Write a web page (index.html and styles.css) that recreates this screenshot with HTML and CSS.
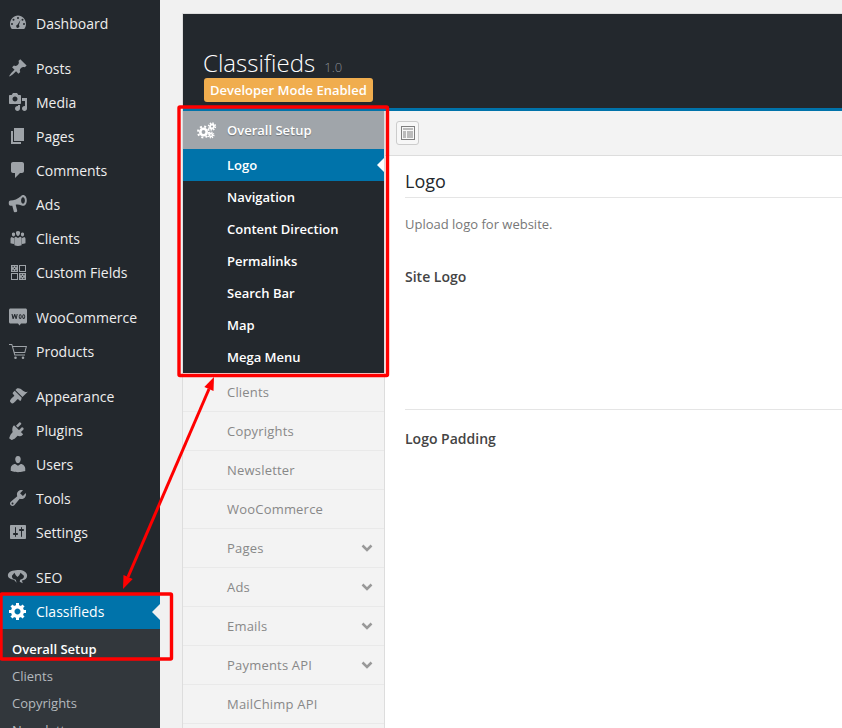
FILE: index.html
```html
<!DOCTYPE html>
<html>

<head>
    <title>Classifieds</title>
    <meta charset="UTF-8">
    <link rel="stylesheet" href="styles.css">
</head>

<body>
    <div class="page">
        <!-- admin menu -->
        <div class="adminmenu">
            <a class="menu-item">
                <svg class="dash" viewBox="0 0 20 20"><path fill-rule="evenodd" d="M3.8 16h12.400C17.300 14.600 18 12.800 18 10.900 18 6.300 14.400 2.500 10 2.500S2 6.300 2 10.900c0 1.900.7 3.700 1.800 5.100zM10 4a1 1 0 1 1 0 2 1 1 0 0 1 0-2zM5.500 5.800a1 1 0 1 1 0 2 1 1 0 0 1 0-2zM14.500 5.800a1 1 0 1 1 0 2 1 1 0 0 1 0-2zM4 10a1 1 0 1 1 0 2 1 1 0 0 1 0-2zM16 10a1 1 0 1 1 0 2 1 1 0 0 1 0-2zM12.500 7l-1.600 5.100a1.600 1.600 0 1 1-1.500-.4z"/></svg>
                Dashboard
            </a>
            <div class="menu-sep"></div>
            <a class="menu-item">
                <svg class="dash" viewBox="0 0 20 20"><path d="M10.440 3.020l1.820-1.820 6.360 6.350-1.830 1.820c-1.050-.68-2.480-.57-3.410.36l-.75.75c-.92.93-1.040 2.350-.35 3.410l-1.830 1.820-2.410-2.410-2.800 2.790c-.42.42-3.380 2.710-3.800 2.290s1.860-3.390 2.280-3.810l2.790-2.790L4.100 9.360l1.830-1.820c1.050.69 2.480.57 3.400-.36l.75-.75c.93-.92 1.050-2.350.36-3.410z"/></svg>
                Posts
            </a>
            <a class="menu-item">
                <svg class="dash" viewBox="0 0 20 20"><path d="M13 11V4c0-.55-.45-1-1-1h-1.670L9 1H5L3.670 3H2c-.55 0-1 .45-1 1v7c0 .55.45 1 1 1h10c.55 0 1-.45 1-1zM7 4.500c1.380 0 2.500 1.120 2.500 2.500S8.380 9.500 7 9.500 4.500 8.380 4.500 7 5.620 4.500 7 4.500zM14 6h5v10.500c0 1.380-1.120 2.500-2.500 2.500S14 17.880 14 16.500s1.120-2.500 2.500-2.500c.17 0 .34.020.5.050V9h-3V6zm-4 8.050V13h2v3.500c0 1.380-1.120 2.500-2.500 2.500S7 17.880 7 16.500 8.120 14 9.500 14c.17 0 .34.020.5.050z"/></svg>
                Media
            </a>
            <a class="menu-item">
                <svg class="dash" viewBox="0 0 20 20"><path d="M6 15V2h10v13H6zm-1 1h8v2H3V5h2v11z"/></svg>
                Pages
            </a>
            <a class="menu-item">
                <svg class="dash" viewBox="0 0 20 20"><path d="M5 2h9c1.100 0 2 .9 2 2v7c0 1.100-.9 2-2 2h-2l-5 5v-5H5c-1.100 0-2-.9-2-2V4c0-1.100.9-2 2-2z"/></svg>
                Comments
            </a>
            <a class="menu-item">
                <svg class="dash" viewBox="0 0 20 20"><path fill-rule="evenodd" d="M15 1c2.400 0 3.800 2.500 3.800 5.400S17.400 11.800 15 11.800c-.5 0-1-.1-1.400-.4C11 10.400 8.700 10.500 7.700 10.800l1.500 6c.1.500-.2 1-.7 1.100l-1.600.4c-.5.1-1-.2-1.100-.7L4.300 11.700 2.600 11.800c-1 0-1.800-.8-1.800-2V8.300c0-1 .7-1.800 1.600-1.900 3.600-.1 7.300-1.300 10.500-4.200C13.500 1.400 14.200 1 15 1zM15 3.200c-1.100 0-1.900 1.400-1.900 3.200s.8 3.200 1.900 3.200 1.900-1.400 1.900-3.200S16.100 3.200 15 3.200z"/></svg>
                Ads
            </a>
            <a class="menu-item">
                <svg class="dash" viewBox="0 0 20 20"><path d="M10 3a2 2 0 0 1 2 2.300c-.1 1.300-.9 2.600-2 2.600S8.100 6.600 8 5.300A2 2 0 0 1 10 3zM5.500 4.500a1.600 1.600 0 0 1 1.600 1.900c-.1 1-.7 2-1.600 2s-1.500-1-1.600-2A1.600 1.600 0 0 1 5.500 4.500zM14.500 4.500a1.600 1.600 0 0 1 1.600 1.900c-.1 1-.7 2-1.600 2s-1.500-1-1.600-2A1.600 1.600 0 0 1 14.500 4.500zM7.800 8.700L10 10l2.200-1.300c.9.300 1.400 1.200 1.400 2.200v6.300c-1.200.5-2.400.7-3.600.7s-2.400-.2-3.600-.7v-6.300c0-1 .5-1.900 1.400-2.200zM3.700 9l1.800 1 .9-.5c-.2.400-.3.900-.3 1.400v5.200C5 16 3.700 15.700 2.500 15.200v-4.400c0-.7.400-1.400 1.200-1.800zM16.300 9c.8.4 1.200 1.100 1.200 1.800v4.400c-1.200.5-2.500.8-3.600.9v-5.200c0-.5-.1-1-.3-1.400l.9.5z"/></svg>
                Clients
            </a>
            <a class="menu-item">
                <svg class="dash" viewBox="0 0 20 20"><path fill-rule="evenodd" d="M3 3h7v7H3zM4.500 4v1.200h1.200V4zM7.300 4v1.200h1.200V4zM5.900 5.900v1.200h1.200V5.900zM4.500 7.800V9h1.200V7.800zM7.300 7.800V9h1.200V7.800zM11 3h7v7h-7zM12 4v5h5V4zM3 11h7v7H3zM4 12v5h5v-5zM11 11h7v7h-7zM12.500 12v1.200h1.200V12zM15.300 12v1.200h1.200V12zM13.900 13.900v1.200h1.200v-1.200zM12.500 15.800V17h1.200v-1.200zM15.300 15.800V17h1.200v-1.200z"/></svg>
                Custom Fields
            </a>
            <div class="menu-sep"></div>
            <a class="menu-item">
                <svg class="dash" viewBox="0 0 20 20"><path fill-rule="evenodd" d="M2.500 1.500h15c.8 0 1.500.7 1.500 1.500v12c0 .8-.7 1.500-1.500 1.500H13l-1.500 2-1.500-2H2.500C1.700 16.500 1 15.800 1 15V3c0-.8.7-1.500 1.500-1.500zM3.500 7l1.100 5h1l1.100-3 .9 3h1L9.700 7h-1l-.6 3L7.200 7h-.9L5.200 10l-.6-3zM12.200 7.200a1.500 2.400 0 1 0 .01 0zM12.200 8.300a.6 1.300 0 1 1-.01 0zM15.700 7.200a1.500 2.400 0 1 0 .01 0zM15.700 8.300a.6 1.300 0 1 1-.01 0z"/></svg>
                WooCommerce
            </a>
            <a class="menu-item">
                <svg class="dash" viewBox="0 0 20 20"><path d="M1 3h3.200l.6 2H19l-1.800 7H6.800l.4 1.500H17v1H6.400L3.500 4H1zM5.100 6l1.500 5h9.800l1.300-5zM7.500 15.500a1.300 1.300 0 1 1 0 2.600 1.300 1.300 0 0 1 0-2.600zM15 15.500a1.300 1.300 0 1 1 0 2.600 1.300 1.300 0 0 1 0-2.600z"/></svg>
                Products
            </a>
            <div class="menu-sep"></div>
            <a class="menu-item">
                <svg class="dash" viewBox="0 0 20 20"><path d="M14.480 11.060L7.410 3.990l1.500-1.500c.5-.56 2.300-.47 3.510.32 1.210.8 1.430 1.280 2.910 2.100 1.180.64 2.450 1.260 4.450.85zm-.71.710L6.700 4.700 4.930 6.470c-.39.39-.39 1.020 0 1.410l1.060 1.060c.39.39.39 1.030 0 1.420-.6.6-1.430 1.150-2.040 1.760-.7.7-2 1.990-1.990 2.960.01.970 1.430 2.390 2.390 2.400.97.010 2.260-1.290 2.960-1.990.61-.61 1.160-1.440 1.760-2.040.39-.39 1.030-.39 1.420 0l1.060 1.060c.39.39 1.020.39 1.410 0z"/></svg>
                Appearance
            </a>
            <a class="menu-item">
                <svg class="dash" viewBox="0 0 20 20"><path d="M13.110 4.360L9.870 7.600 8 5.730l3.240-3.240c.35-.34 1.050-.2 1.560.32.52.51.66 1.210.31 1.550zm-8 1.770l.91-.91 9.130 9.130-.91.91c-.96.96-3.200 1.300-4.630.6L6.600 18.700c-.4.4-3 1.300-3 1.300l-2.500-1.700 1.400-3.600 2.200-2.700C4 10.600 4.200 7.100 5.110 6.130zm10.370 3.300l-3.240 3.240-1.870-1.870 3.240-3.240c.34-.35 1.040-.21 1.550.31.52.51.66 1.210.32 1.560z"/></svg>
                Plugins
            </a>
            <a class="menu-item">
                <svg class="dash" viewBox="0 0 20 20"><path d="M10 9.250c-2.270 0-2.730-3.440-2.730-3.440C7 4.020 7.820 2 9.970 2c2.160 0 2.980 2.020 2.710 3.810 0 0-.41 3.440-2.680 3.440zm0 2.570L12.720 10c2.390 0 4.520 2.330 4.520 4.530v2.490s-3.650 1.130-7.240 1.130c-3.650 0-7.240-1.130-7.240-1.130v-2.490c0-2.250 1.940-4.480 4.470-4.480z"/></svg>
                Users
            </a>
            <a class="menu-item">
                <svg class="dash" viewBox="0 0 20 20"><path d="M16.680 9.770c-1.340 1.340-3.300 1.670-4.950.99l-5.410 6.520c-.99.99-2.590.99-3.580 0s-.99-2.590 0-3.570l6.520-5.420c-.68-1.650-.35-3.610.99-4.950 1.280-1.280 3.120-1.620 4.720-1.060l-2.890 2.890 2.820 2.820 2.860-2.870c.53 1.580.18 3.400-1.080 4.660zM3.810 16.210c.4.390 1.030.39 1.420 0 .4-.4.4-1.030 0-1.420-.39-.4-1.020-.4-1.420 0-.39.39-.39 1.020 0 1.420z"/></svg>
                Tools
            </a>
            <a class="menu-item">
                <svg class="dash" viewBox="0 0 20 20"><path d="M18 16V4c0-.55-.45-1-1-1H3c-.55 0-1 .45-1 1v12c0 .55.45 1 1 1h14c.55 0 1-.45 1-1zM8 11h1c.55 0 1 .45 1 1s-.45 1-1 1H8v1.500c0 .28-.22.5-.5.5s-.5-.22-.5-.5V13H6c-.55 0-1-.45-1-1s.45-1 1-1h1V5.500c0-.28.22-.5.5-.5s.5.22.5.5V11zm5-2h-1c-.55 0-1-.45-1-1s.45-1 1-1h1V5.500c0-.28.22-.5.5-.5s.5.22.5.5V7h1c.55 0 1 .45 1 1s-.45 1-1 1h-1v5.500c0 .28-.22.5-.5.5s-.5-.22-.5-.5V9z"/></svg>
                Settings
            </a>
            <div class="menu-sep"></div>
            <a class="menu-item">
                <svg class="dash seo" viewBox="0 0 24 20"><path d="M12 2C17 1.500 23 3.500 23 8.500c0 3-2.500 5-6 5.500l1 3-3.500-1.500.5-2.500 1.500-.5c2-.5 3.200-2 2.800-4L15.500 5l-1.500 3-2 2-2-2-1.500-3L5.700 8.500c-.4 2 .8 3.500 2.800 4l1.500.5 1 3.500-3-3.500C4 12.500 1 11 1 8 1 3.800 7 2.300 12 2z"/></svg>
                SEO
            </a>
            <a class="menu-item current">
                <svg class="dash" viewBox="0 0 20 20"><path fill-rule="evenodd" d="M18 12h-2.180c-.17.7-.44 1.350-.81 1.930l1.540 1.540-2.100 2.100-1.540-1.540c-.58.36-1.230.64-1.910.81V19H8v-2.180c-.68-.17-1.330-.45-1.910-.81l-1.540 1.540-2.120-2.120 1.540-1.540c-.36-.58-.63-1.230-.79-1.890H1V9h2.180c.17-.7.44-1.350.81-1.930L2.450 5.530l2.100-2.100 1.540 1.540c.58-.36 1.230-.64 1.910-.81V2h3v2.180c.68.17 1.330.45 1.910.81l1.540-1.540 2.120 2.120-1.540 1.540c.36.58.63 1.230.79 1.890H18v3zm-8.500 1.500c1.660 0 3-1.340 3-3s-1.340-3-3-3-3 1.340-3 3 1.340 3 3 3z"/></svg>
                Classifieds
            </a>
            <div class="submenu">
                <a class="active">Overall Setup</a>
                <a>Clients</a>
                <a>Copyrights</a>
                <a>Newsletter</a>
            </div>
        </div>

        <!-- options panel -->
        <div class="main">
            <div class="panel">
                <div class="panel-head">
                    <h1>Classifieds <small>1.0</small></h1>
                    <span class="badge">Developer Mode Enabled</span>
                </div>
                <div class="panel-body">
                    <div class="tabs">
                        <div class="tab-group">
                            <svg class="gears" viewBox="0 0 20 17">
                                <circle class="gear-ring" cx="6.500" cy="10" r="3.200" stroke-width="2.600"/>
                                <circle class="gear-ring" cx="6.500" cy="10" r="5.500" stroke-width="2" stroke-dasharray="2 2.320"/>
                                <circle class="gear-ring" cx="15" cy="4.500" r="2" stroke-width="1.800"/>
                                <circle class="gear-ring" cx="15" cy="4.500" r="3.400" stroke-width="1.600" stroke-dasharray="1.400 1.270"/>
                                <circle class="gear-ring" cx="14" cy="13" r="1.500" stroke-width="1.500"/>
                                <circle class="gear-ring" cx="14" cy="13" r="2.800" stroke-width="1.400" stroke-dasharray="1.200 1"/>
                            </svg>
                            Overall Setup
                        </div>
                        <div class="tab-sub">
                            <a class="active">Logo</a>
                            <a>Navigation</a>
                            <a>Content Direction</a>
                            <a>Permalinks</a>
                            <a>Search Bar</a>
                            <a>Map</a>
                            <a>Mega Menu</a>
                        </div>
                        <a class="tab">Clients</a>
                        <a class="tab">Copyrights</a>
                        <a class="tab">Newsletter</a>
                        <a class="tab">WooCommerce</a>
                        <a class="tab">Pages <svg class="chev" viewBox="0 0 12 8"><path d="M1.500 1.500L6 6l4.500-4.500"/></svg></a>
                        <a class="tab">Ads <svg class="chev" viewBox="0 0 12 8"><path d="M1.500 1.500L6 6l4.500-4.500"/></svg></a>
                        <a class="tab">Emails <svg class="chev" viewBox="0 0 12 8"><path d="M1.500 1.500L6 6l4.500-4.500"/></svg></a>
                        <a class="tab">Payments API <svg class="chev" viewBox="0 0 12 8"><path d="M1.500 1.500L6 6l4.500-4.500"/></svg></a>
                        <a class="tab">MailChimp API</a>
                    </div>
                    <div class="content">
                        <div class="toolbar">
                            <div class="tool-btn">
                                <svg viewBox="0 0 14 14">
                                    <rect class="pane" x="2" y="2" width="10" height="2"/>
                                    <rect class="pane" x="2" y="5" width="3" height="7"/>
                                    <rect class="pane" x="6" y="5" width="6" height="7"/>
                                    <rect class="frame" x=".5" y=".5" width="13" height="13"/>
                                </svg>
                            </div>
                        </div>
                        <div class="fields">
                            <h2>Logo</h2>
                            <p class="desc">Upload logo for website.</p>
                            <div class="field field-logo">Site Logo</div>
                            <div class="field">Logo Padding</div>
                        </div>
                    </div>
                </div>
            </div>
        </div>
    </div>

    <!-- red annotations drawn over the screenshot -->
    <svg class="notes" viewBox="0 0 842 728">
        <rect x="179" y="107" width="208.500" height="268.500" rx="1"/>
        <rect x="1" y="594" width="170.500" height="65" rx="1"/>
        <line x1="209" y1="389" x2="128" y2="577"/>
        <polygon points="214,377 213.500,391 204.300,387"/>
        <polygon points="123,589 132.700,579 123.500,575"/>
    </svg>
</body>

</html>
```

FILE: styles.css
```css
html, body {
    margin: 0;
    padding: 0;
    height: 728px;
    overflow: hidden;
}

body {
    font-family: "Open Sans", sans-serif;
    font-size: 13px;
    background-color: #f1f1f1;
    color: #444;
    position: relative;
}

a {
    text-decoration: none;
    display: block;
}

.page {
    display: flex;
    height: 728px;
}

/* admin menu */
.adminmenu {
    width: 160px;
    flex-shrink: 0;
    height: 728px;
    overflow: hidden;
    padding-top: 7px;
    box-sizing: border-box;
    background-color: #23282d;
}

.menu-item {
    position: relative;
    display: flex;
    align-items: center;
    height: 34px;
    padding: 0 0 2px 8px;
    font-size: 14px;
    color: #eee;
    box-sizing: border-box;
}

.menu-sep {
    height: 11px;
}

.dash {
    width: 20px;
    height: 20px;
    margin-right: 8px;
    flex-shrink: 0;
    fill: #9ea3a8;
}

.seo {
    margin-left: -1px;
    width: 21px;
    margin-right: 8px;
}

.menu-item.current {
    background-color: #0073aa;
    color: #fff;
}

.menu-item.current .dash {
    fill: #fff;
}

.menu-item.current::after {
    content: "";
    position: absolute;
    right: 0;
    top: 9px;
    border: 8px solid transparent;
    border-right-color: #f1f1f1;
    border-left-width: 0;
}

.submenu {
    background-color: #32373c;
    padding: 7px 0;
}

.submenu a {
    height: 27px;
    line-height: 27px;
    padding-left: 12px;
    color: #b4b9be;
}

.submenu a.active {
    color: #fff;
    font-weight: 600;
}

/* options panel */
.main {
    flex: 1;
    min-width: 0;
    padding: 13px 0 0 22px;
}

.panel {
    border: 1px solid #ddd;
    border-right: none;
    border-bottom: none;
}

.panel-head {
    height: 97px;
    padding: 0 0 0 20px;
    box-sizing: border-box;
    background-color: #23282d;
    border-bottom: 3px solid #0073aa;
}

.panel-head h1 {
    margin: 0;
    padding-top: 32px;
    font-size: 24px;
    font-weight: 300;
    line-height: 33px;
    color: #fff;
}

.panel-head h1 small {
    margin-left: 3px;
    font-size: 13px;
    color: #8a8f94;
}

.badge {
    display: block;
    width: fit-content;
    margin: -6px 0 0 1px;
    padding: 0 6px;
    height: 24px;
    line-height: 24px;
    border-radius: 3px;
    font-size: 13px;
    font-weight: 600;
    color: #fff;
    background-color: #f0ad4e;
}

.panel-body {
    display: flex;
}

.tabs {
    width: 201px;
    flex-shrink: 0;
    height: 630px;
    overflow: hidden;
    border-right: 1px solid #ddd;
    background-color: #f3f3f3;
}

.tab-group {
    display: flex;
    align-items: center;
    height: 38px;
    padding-left: 14px;
    font-weight: 600;
    color: #fff;
    background-color: #a0a5aa;
    text-shadow: 0 1px 1px rgba(0, 0, 0, 0.3);
}

.gears {
    width: 20px;
    height: 17px;
    margin-right: 10px;
}

.gear-ring {
    fill: none;
    stroke: #fff;
}

.tab-sub {
    background-color: #23282d;
}

.tab-sub a {
    position: relative;
    height: 32px;
    line-height: 32px;
    padding-left: 44px;
    font-weight: 600;
    color: #fff;
}

.tab-sub a.active {
    background-color: #0073aa;
}

.tab-sub a.active::after {
    content: "";
    position: absolute;
    right: 0;
    top: 9px;
    border: 7px solid transparent;
    border-right-color: #fff;
    border-left-width: 0;
}

.tab {
    display: flex;
    justify-content: space-between;
    align-items: center;
    height: 39px;
    padding: 0 11px 0 44px;
    box-sizing: border-box;
    color: #888;
    letter-spacing: 0.2px;
    border-bottom: 1px solid #e9e9e9;
}

.chev {
    width: 12px;
    height: 8px;
    fill: none;
    stroke: #999;
    stroke-width: 2.500;
}

.content {
    flex: 1;
    min-width: 0;
    background-color: #fff;
}

.toolbar {
    height: 45px;
    padding: 10px 0 0 11px;
    box-sizing: border-box;
    background-color: #f3f3f3;
    border-bottom: 1px solid #ddd;
}

.tool-btn {
    display: flex;
    align-items: center;
    justify-content: center;
    width: 23px;
    height: 24px;
    box-sizing: border-box;
    border: 1px solid #ccc;
    border-radius: 3px;
    background-color: #f7f7f7;
}

.tool-btn svg {
    width: 14px;
    height: 14px;
}

.pane {
    fill: #bbb;
}

.frame {
    fill: none;
    stroke: #808080;
}

.fields {
    padding-left: 20px;
}

.fields h2 {
    margin: 0;
    padding: 14px 0 4px;
    height: 23px;
    font-size: 18px;
    font-weight: 400;
    line-height: 23px;
    color: #23282d;
    border-bottom: 1px solid #e5e5e5;
}

.desc {
    margin: 0;
    padding-top: 17px;
    line-height: 18px;
    color: #777;
}

.field {
    font-size: 14px;
    font-weight: 600;
    color: #444;
    line-height: 20px;
    padding-top: 19px;
}

.field-logo {
    height: 142px;
    margin-top: 16px;
    padding-top: 18px;
    border-bottom: 1px solid #e5e5e5;
}

/* annotations */
.notes {
    position: absolute;
    left: 0;
    top: 0;
    width: 842px;
    height: 728px;
}

.notes rect {
    fill: none;
    stroke: #f00;
    stroke-width: 3.400;
}

.notes line {
    stroke: #f00;
    stroke-width: 3;
}

.notes polygon {
    fill: #f00;
}
```
